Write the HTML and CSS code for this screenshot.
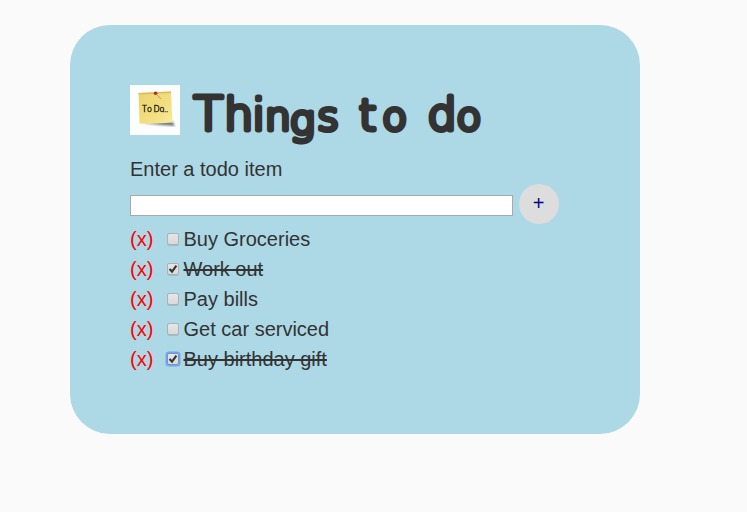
FILE: index.html
```html
<!DOCTYPE html>
<html lang="en">
<head>
<meta charset="utf-8">
<title>Things to do</title>
<link rel="stylesheet" href="styles.css">
</head>
<body>
<main class="card">
  <header class="header">
    <svg class="note" viewBox="0 0 50 50" aria-hidden="true">
      <defs>
        <linearGradient id="paper" x1="0" y1="0" x2="1" y2="1"><stop offset="0" stop-color="#ead36f"/><stop offset=".6" stop-color="#f3df80"/><stop offset="1" stop-color="#f8eb9c"/></linearGradient>
        <filter id="soft" x="-20%" y="-20%" width="140%" height="140%"><feGaussianBlur stdDeviation="1"/></filter>
      </defs>
      <rect width="50" height="50" fill="#fcfefd"/>
      <path d="M13 38L42 36L45 41L31 40Z" fill="#747779" filter="url(#soft)"/>
      <path d="M8.5 8L41 6.5L42.5 37.5Q27 39 9.5 38.5Z" fill="url(#paper)"/>
      <path d="M8.5 8L41 6.5L41.1 8L8.6 9.5Z" fill="#d8bd58"/>
      <path d="M27 10L31 14" stroke="#b9a15b" stroke-width="1"/>
      <circle cx="25.6" cy="8.3" r="1.8" fill="#c3212c"/>
      <text class="note-text" y="26.5" x="12 17 21 23.5 29.5 32.5 34.2 36">To Do...</text>
    </svg>
    <h1 class="title">
      <svg class="title-art" width="300" height="70" viewBox="0 0 300 70">
        <text class="title-text" transform="scale(1.04 1)" y="50.5" x="3.6 33 60 72 96 122.5 145 162.5 184.8 205 228.3 256.3"><tspan class="cap">T</tspan><tspan class="tall">h</tspan><tspan class="dotted">i</tspan>n<tspan class="low" dy="4">g</tspan><tspan dy="-4">s</tspan> <tspan class="cross">t</tspan>o <tspan class="tall">d</tspan>o</text>
      </svg>
    </h1>
  </header>
  <label class="label" for="item">Enter a todo item</label>
  <form class="entry">
    <input class="field" id="item" type="text">
    <button class="add" type="button">+</button>
  </form>
  <ul class="list">
    <li class="row"><span class="remove">(x)</span><span class="box"></span><span>Buy Groceries</span></li>
    <li class="row"><span class="remove">(x)</span><span class="box"><svg class="tick" viewBox="0 0 10 10"><path d="M1.5 5.1L4 7.6L8.4 1.6"/></svg></span><span class="done">Work out</span></li>
    <li class="row"><span class="remove">(x)</span><span class="box"></span><span>Pay bills</span></li>
    <li class="row"><span class="remove">(x)</span><span class="box"></span><span>Get car serviced</span></li>
    <li class="row"><span class="remove">(x)</span><span class="box focused"><svg class="tick" viewBox="0 0 10 10"><path d="M1.5 5.1L4 7.6L8.4 1.6"/></svg></span><span class="done">Buy birthday gift</span></li>
  </ul>
</main>
</body>
</html>
```
FILE: styles.css
```css
* { box-sizing: border-box; }
body {
  margin: 0;
  background: #fafafa;
  color: #333;
  font: 20px/30px "Liberation Sans", Arial, sans-serif;
}
.card {
  width: 570px;
  height: 409px;
  margin: 25px 0 0 70px;
  padding: 60px;
  border-radius: 40px;
  background: #add8e6;
}
.header { display: flex; height: 69px; }
.note { width: 50px; height: 50px; flex: none; }
.note-text { font: 200 8px "DejaVu Sans", sans-serif; fill: #292514; stroke: #292514; stroke-width: .5px; }
.title { margin: -5px 0 0 10px; height: 70px; line-height: 0; }
.title-art { display: block; overflow: visible; }
.title-text {
  font: 200 39px "DejaVu Sans", sans-serif;
  fill: #333;
  stroke: #333;
  stroke-width: 5px;
  stroke-linejoin: round;
  stroke-linecap: round;
}
.cap { font-size: 46px; }
.tall { font-size: 44px; }
.dotted { font-size: 43px; }
.low { font-size: 40px; }
.cross { font-size: 42px; }
.label { display: block; height: 30px; }
.entry { display: flex; align-items: center; height: 40px; gap: 6px; margin: 0; }
.field { width: 383px; height: 21px; margin-top: 3px; padding: 1px; border: 1px solid #a9a9a9; background: #fff; }
.add {
  width: 40px;
  height: 40px;
  padding: 0 1px 1px 0;
  border: 0;
  border-radius: 50%;
  background: #ddd;
  color: #00008b;
  font: 20px "Liberation Sans", Arial, sans-serif;
}
.list { margin: 0; padding: 0; list-style: none; }
.row { display: flex; align-items: center; height: 30px; white-space: pre; }
.remove { width: 37px; color: #f00; }
.box {
  width: 12px;
  height: 12px;
  margin-right: 4.5px;
  border: 1px solid #adb1b2;
  border-radius: 2px;
  background: linear-gradient(#e6e6e6, #d9d9d9);
  box-shadow: 0 1px 0 #9fc0cb;
}
.focused { border-color: #7895c0; box-shadow: 0 0 0 1.5px #6ca6ef; }
.tick { display: block; width: 10px; height: 10px; fill: none; stroke: #333; stroke-width: 2.1px; }
.done { text-decoration: line-through; }
```
